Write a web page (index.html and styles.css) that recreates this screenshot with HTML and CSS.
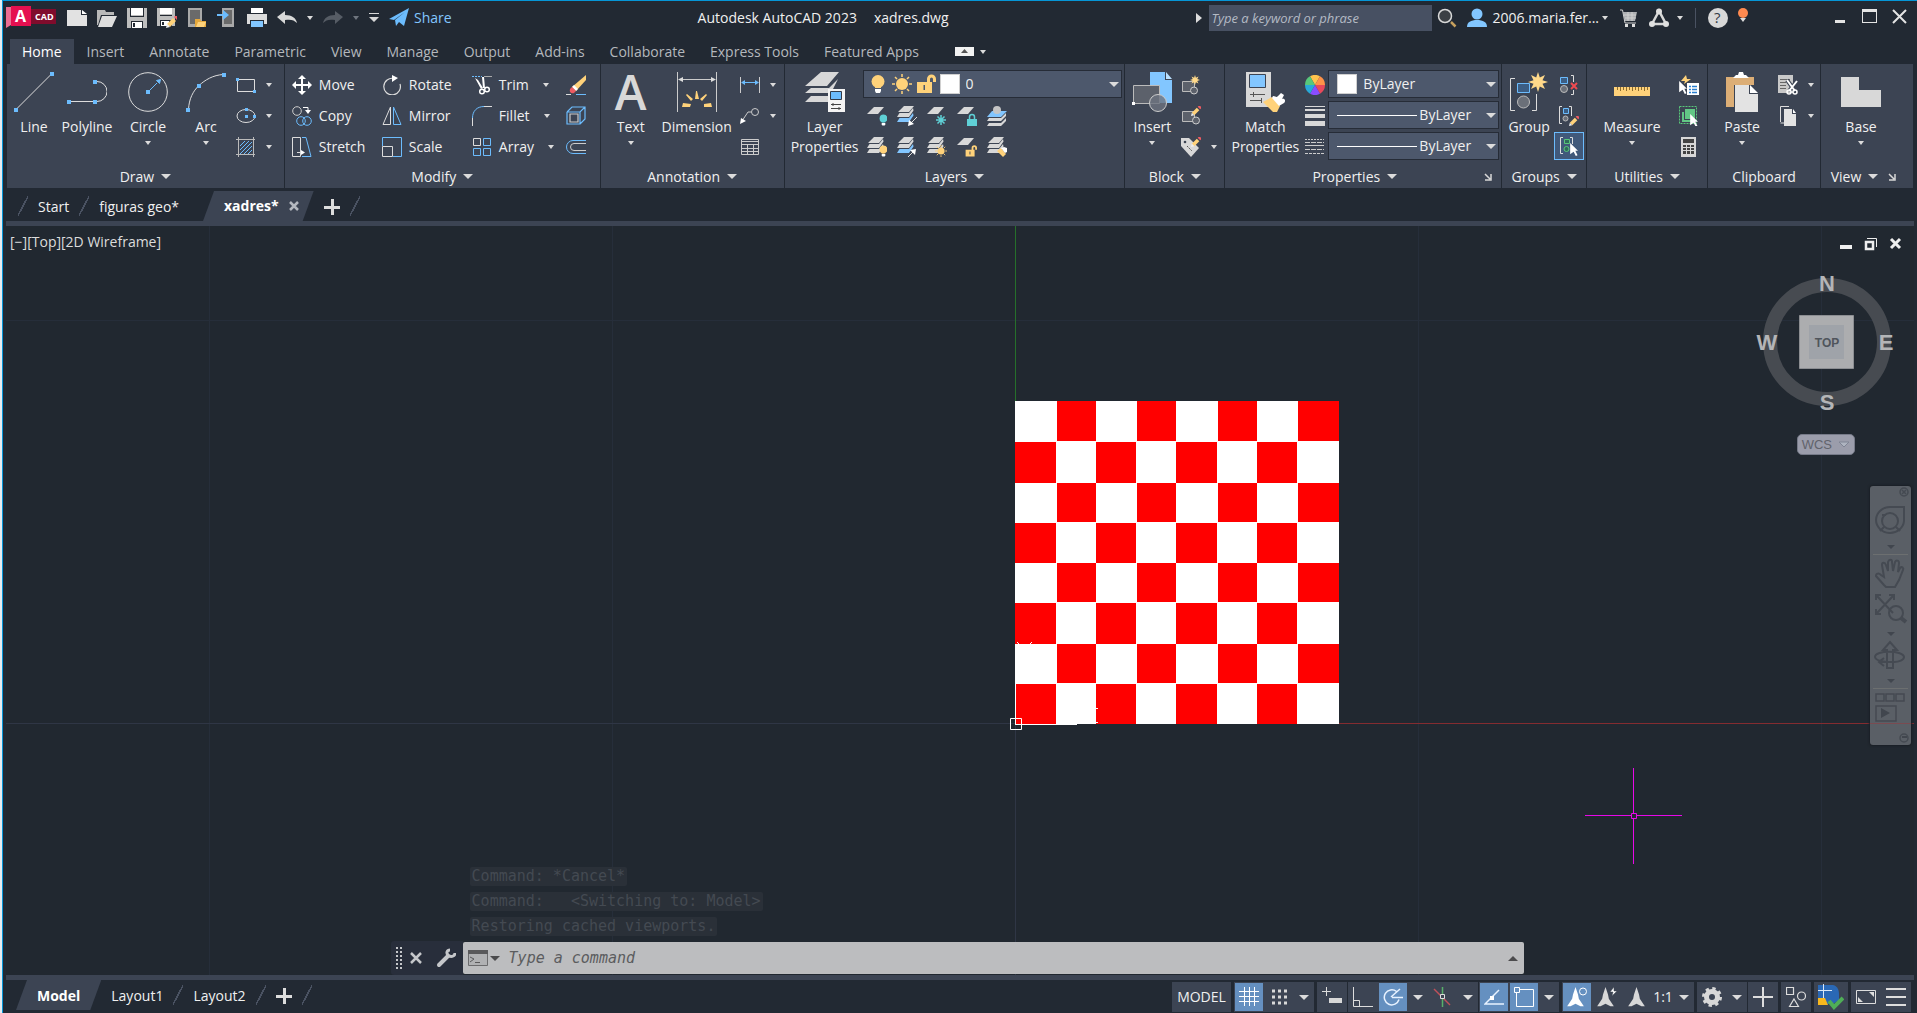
FILE: index.html
```html
<!DOCTYPE html>
<html lang="en">
  <head>
    <meta charset="UTF-8" />
    <meta name="viewport" content="width=device-width, initial-scale=1.0" />
    <title>Autodesk AutoCAD 2023 - xadres.dwg</title>
    <link rel="stylesheet" href="styles.css">
  </head>

  <body>
    <!-- Shared shapes -->
    <svg class="defs" width="0" height="0" aria-hidden="true">
      <symbol id="sheet" viewBox="0 0 20 20"><path fill="#d8d8d8" d="M7 1h10l-6 7H0z" /></symbol>
      <symbol id="stack" viewBox="0 0 20 20">
        <path fill="#d8d8d8" d="M7 0h10l-5 6H1zM2.500 7H12l4-5 .5 2.500L12 11H0zM2.500 12H12l4-5 .5 2.500L12 16H0z" />
      </symbol>
      <symbol id="stack-blue" viewBox="0 0 20 20">
        <path fill="#d8d8d8" d="M7 0h10l-5 6H1zM2.500 7H12l4-5 .5 2.500L12 11H0z" />
        <path fill="#82c6ff" d="M2.500 12H12l4-5 .5 2.500L12 16H0z" />
      </symbol>
      <symbol id="bulb" viewBox="0 0 14 20">
        <circle cx="7" cy="7.500" r="6.500" /><path d="M4 12h6v2H4z" /><path fill="#fff" d="M4 15h6v2l-1 2H5l-1-2z" />
      </symbol>
      <symbol id="sun" viewBox="0 0 20 20">
        <circle cx="10" cy="10" r="6" />
        <path stroke-width="1.500" d="M10 0v3M10 17v3M0 10h3M17 10h3M3 3l2 2M15 15l2 2M3 17l2-2M15 5l2-2" />
      </symbol>
      <symbol id="lock-open" viewBox="0 0 20 20">
        <path fill-rule="evenodd" d="M1 8h10V5a4.500 4.500 0 0 1 9 0v3h-3V5a1.500 1.500 0 0 0-3 0v3h2v11H1zM7.500 11v5h1.500v-5z" />
      </symbol>
      <symbol id="pencil" viewBox="0 0 12 12">
        <path fill="#ffd27a" d="M7 2l3 3-6 6-3-3z" /><path fill="#ee5b62" d="M8 1l1-1h2l1 1v2l-1 1z" /><path fill="#eee" d="M1 8l3 3-4 1z" />
      </symbol>
      <symbol id="cursor" viewBox="0 0 10 15">
        <path fill="#fff" d="M0 0l9 9H6l2.500 5-2 1L4 10l-4 3z" />
      </symbol>
      <symbol id="star" viewBox="0 0 20 20">
        <path fill="#ffd98a" d="M10 0l1.800 5.500L17 3l-2.500 5.200L20 10l-5.500 1.800L17 17l-5.200-2.500L10 20l-1.800-5.500L3 17l2.500-5.200L0 10l5.500-1.800L3 3l5.200 2.500z" />
      </symbol>
      <symbol id="arrow-head" viewBox="0 0 22 24">
        <path d="M11 0l3 9 1 5 6 9h-4l-6-3-6 3H1l6-9 1-5z" />
      </symbol>
      <symbol id="launcher" viewBox="0 0 8 8">
        <path fill="none" stroke="#d8d8d8" stroke-width="1.500" d="M1 1l5 5M7 1v6H1" />
      </symbol>
    </svg>

    <div class="app">
      <!-- Title bar -->
      <header class="titlebar">
        <div class="quick-access">
          <button class="logo" aria-label="Application menu">
            <svg width="50" height="24" viewBox="0 0 50 24">
              <path fill="#ec6d92" d="M0 1h5v18L0 22z" /><path fill="#800c2c" d="M24 3h26v15H24z" />
              <path fill="#e51050" d="M5 0h20v20H5z" />
              <text x="9" y="16" class="logo-a">A</text><text x="29" y="14" class="logo-cad">CAD</text>
            </svg>
          </button>
          <button aria-label="New"><svg class="icon" viewBox="0 0 20 20"><path fill="#e2e2e2" d="M0 2h14v5h6v11H0z" /><path fill="#fff" d="M15 2l5 4h-5z" /></svg></button>
          <button aria-label="Open"><svg class="icon" viewBox="0 0 20 20"><path fill="#b9b9b9" d="M0 2h8l1 2h8v3H4L1 17H0z" /><path fill="#dedede" d="M5 8h15l-5 11H1z" /></svg></button>
          <button aria-label="Save"><svg class="icon" viewBox="0 0 20 20"><path fill="#bdbdbd" d="M0 0h20v20H0z" /><path fill="#232932" d="M3 0h1v8h12V0h1v9H3z" /><path fill="#fff" d="M4 0h12v7H4z" /><path fill="#232932" d="M4 13h12v7H4z" /><path fill="#fff" d="M5 14h10v6H5z" /><path fill="#232932" d="M6 15h2v4H6z" /></svg></button>
          <button aria-label="Save As"><svg class="icon" viewBox="0 0 20 20"><path fill="#bdbdbd" d="M0 0h18v18H0z" /><path fill="#fff" d="M3 0h12v6H3z" /><path fill="#232932" d="M3 7h12v1H3zM3 12h12v6H3z" /><path fill="#fff" d="M4 13h8v5H4z" /><path fill="#232932" d="M5 14h2v3H5z" /><use href="#pencil" x="9" y="8" width="12" height="12" /></svg></button>
          <button aria-label="Open from Web and Mobile"><svg class="icon" viewBox="0 0 20 20"><path fill="#a9a9a9" d="M1 0h14v19H1z" /><path fill="#6a6a6a" d="M3 2h10v14H3z" /><path fill="#e5a83c" d="M8 11h5l1 2h5v6H8z" /><path fill="#ffd27a" d="M11 14h8l-2 5H9z" /></svg></button>
          <button aria-label="Save to Web and Mobile"><svg class="icon" viewBox="0 0 20 20"><path fill="#a9a9a9" d="M5 0h12v19H5z" /><path fill="#6a6a6a" d="M7 2h8v14H7z" /><path fill="#6cbcfd" d="M0 6h6V2l6 5-6 5V8H0z" /></svg></button>
          <button aria-label="Plot"><svg class="icon" viewBox="0 0 20 20"><path fill="#fff" d="M4 0h12v5H4z" /><path fill="#dcdcdc" d="M0 6h20v10h-3v-4H3v4H0z" /><path fill="#82c6ff" d="M4 13h12v6H4z" /></svg></button>
          <button aria-label="Undo"><svg class="icon" viewBox="0 0 20 20"><path fill="#d8d8d8" d="M0 9l8-6v4c7 0 11 3 12 8-3-3-6-4-12-3v4z" /></svg></button>
          <button class="narrow" aria-label="Undo list"><i class="caret"></i></button>
          <button aria-label="Redo"><svg class="icon" viewBox="0 0 20 20"><path fill="#565c65" d="M20 9l-8-6v4C5 7 1 10 0 15c3-3 6-4 12-3v4z" /></svg></button>
          <button class="narrow" aria-label="Redo list"><i class="caret dim"></i></button>
          <button aria-label="Customize toolbar"><svg width="10" height="10" viewBox="0 0 10 10"><path fill="#d8d8d8" d="M0 0h10v1H0zM0 4h10L5 9z" /></svg></button>
          <button class="share"><svg class="icon" viewBox="0 0 20 20"><path fill="#6cbcfd" d="M0 11L20 0l-5 18-5-4-3 4-1-6L16 4 5 12z" /></svg>Share</button>
        </div>

        <h1 class="window-title"><span>Autodesk AutoCAD 2023</span><span>xadres.dwg</span></h1>

        <div class="title-tools">
          <svg width="8" height="10" viewBox="0 0 8 10"><path fill="#ddd" d="M1 0l6 5-6 5z" /></svg>
          <input class="search" type="text" placeholder="Type a keyword or phrase" aria-label="Search help" />
          <button aria-label="Search"><svg class="icon" viewBox="0 0 20 20"><path stroke="#c6a05e" stroke-width="2.500" d="M14 14l4.500 4.500" /><circle cx="8" cy="8" r="6.500" fill="#3c4045" stroke="#d8d8d8" stroke-width="1.500" /></svg></button>
          <button class="user"><svg class="icon" viewBox="0 0 20 20"><circle cx="10" cy="6" r="5.500" fill="#82c6ff" /><path fill="#82c6ff" d="M0 19c0-5 4-7 10-7s10 2 10 7z" /></svg>2006.maria.fer...<i class="caret"></i></button>
          <button class="cart" aria-label="Autodesk App Store"><svg class="icon" viewBox="0 0 20 20"><path fill="#aeb0b3" d="M4 4h14l-2 9H6z" /><path fill="none" stroke="#d0d0d0" d="M1 2h2.500L6 15h11M5 7h12M6 10h11M9 4v9M13 4v9" /><path fill="#ddd" d="M6 16h3v3H6zM13 16h3v3h-3z" /></svg></button>
          <button class="connect" aria-label="Connect"><svg class="icon" viewBox="0 0 20 20"><path fill="none" stroke="#d8d8d8" stroke-width="2.500" d="M10 3L3 16h14z" /><g fill="#e0e0e0"><circle cx="10" cy="3.500" r="3" /><circle cx="3" cy="16" r="3" /><circle cx="17" cy="16" r="3" /></g></svg><i class="caret"></i></button>
          <button class="help" aria-label="Help"><svg class="icon" viewBox="0 0 20 20"><circle cx="10" cy="10" r="10" fill="#d8d8d8" /><text x="6" y="15" class="help-mark">?</text></svg></button>
          <button class="notice" aria-label="Notifications"><i class="dot"></i><i class="caret"></i></button>
          <div class="window-buttons">
            <button aria-label="Minimize"><svg width="16" height="16" viewBox="0 0 16 16"><path fill="#e4e4e4" d="M3 12h10v3H3z" /></svg></button>
            <button aria-label="Maximize"><svg width="16" height="16" viewBox="0 0 16 16"><path fill="#e4e4e4" fill-rule="evenodd" d="M0 1h15v14H0zM1 4v10h13V4z" /></svg></button>
            <button aria-label="Close"><svg width="16" height="16" viewBox="0 0 16 16"><path stroke="#e4e4e4" stroke-width="2" d="M1 2l13 13M14 2L1 15" /></svg></button>
          </div>
        </div>
      </header>

      <!-- Ribbon tabs -->
      <nav class="ribbon-tabs">
        <button class="active">Home</button>
        <button>Insert</button>
        <button>Annotate</button>
        <button>Parametric</button>
        <button>View</button>
        <button>Manage</button>
        <button>Output</button>
        <button>Add-ins</button>
        <button>Collaborate</button>
        <button>Express Tools</button>
        <button>Featured Apps</button>
        <button class="minimize" aria-label="Minimize ribbon"><svg width="19" height="9" viewBox="0 0 19 9"><path fill="#f2f2f2" d="M0 0h19v9H0z" /><path fill="#555" d="M6 6l3.500-4L13 6z" /></svg><i class="caret"></i></button>
      </nav>

      <!-- Ribbon -->
      <div class="ribbon">
        <section class="panel draw">
          <div class="panel-body">
            <button class="big"><svg viewBox="0 0 40 40"><path stroke="#ddd" d="M1.500 38L38 1.500" /><path fill="#6cbcfd" d="M0 36h4v4H0zM36 0h4v4h-4z" /></svg>Line</button>
            <button class="big medium"><svg viewBox="0 0 40 40"><path fill="none" stroke="#ddd" d="M1 29.500h29a10 10 0 0 0 0-20h-3" /><path fill="#6cbcfd" d="M0 28h4v4H0zM26 28h4v4h-4zM26 8h4v4h-4z" /></svg>Polyline</button>
            <button class="big wide"><svg viewBox="0 0 40 40"><circle cx="20" cy="20" r="19.300" fill="none" stroke="#ddd" /><path fill="#6cbcfd" stroke="#6cbcfd" d="M20 20l9-9M28.500 8.500l4-1-1 4z" /><path fill="#6cbcfd" d="M18 18h4v4h-4z" /></svg>Circle<i class="caret"></i></button>
            <button class="big"><svg viewBox="0 0 40 40"><path fill="none" stroke="#ddd" d="M2.500 37.500C3 27 7 19 13 13.500S27 3 37.500 2.500" /><path fill="#6cbcfd" d="M0 36h4v4H0zM11 12h4v4h-4zM36 1h4v4h-4z" /></svg>Arc<i class="caret"></i></button>
            <div class="tools">
              <button aria-label="Rectangle"><svg class="icon" viewBox="0 0 20 20"><path fill="none" stroke="#ddd" d="M1.500 4.500h17v12h-17z" /><path fill="#6cbcfd" d="M0 3h3v3H0zM17 15h3v3h-3z" /></svg><i class="caret"></i></button>
              <button aria-label="Ellipse"><svg class="icon" viewBox="0 0 20 20"><ellipse cx="10" cy="10" rx="9" ry="6.500" fill="none" stroke="#ddd" /><path fill="#6cbcfd" d="M9 2h3v3H9zM9 9h3v3H9zM17 9h3v3h-3z" /></svg><i class="caret"></i></button>
              <button aria-label="Hatch"><svg class="icon" viewBox="0 0 20 20"><path stroke="#6cbcfd" d="M4 9l5-5M4 13l9-9M4 17L16 5M8 17l8-8M12 17l4-4" /><path stroke="#bbb" d="M0 2.500h19M0 17.500h19M2.500 0v20M17.500 0v20" /></svg><i class="caret"></i></button>
            </div>
          </div>
          <div class="panel-title"><button>Draw<i class="caret"></i></button></div>
        </section>

        <section class="panel modify">
          <div class="panel-body">
            <div class="tools">
              <button><svg class="icon" viewBox="0 0 20 20"><path fill="#fff" d="M10 0l4 4h-3v5h5V6l4 4-4 4v-3h-5v5h3l-4 4-4-4h3v-5H4v3l-4-4 4-4v3h5V4H6z" /></svg>Move</button>
              <button><svg class="icon" viewBox="0 0 20 20"><circle cx="5" cy="5" r="4.300" fill="none" stroke="#ccc" /><path fill="none" stroke="#fff" d="M11 1.500h5v4" /><path fill="#fff" d="M13 4h6l-3 4z" /><g fill="none" stroke="#6cbcfd"><circle cx="9" cy="15" r="4.300" /><circle cx="15" cy="15" r="4.300" /></g></svg>Copy</button>
              <button><svg class="icon" viewBox="0 0 20 20"><path fill="none" stroke="#ddd" d="M.5.500h8v19h-8zM5 15.500h5" /><path fill="#fff" d="M9 13l4 2.500L9 18z" /><path fill="none" stroke="#6cbcfd" d="M10 .5h4l5 19h-9" /></svg>Stretch</button>
            </div>
            <div class="tools">
              <button><svg class="icon" viewBox="0 0 20 20"><path fill="none" stroke="#ddd" stroke-width="1.200" d="M12 3.500A8.300 8.300 0 1 0 18 9" /><path fill="#fff" d="M10 0l6 3-6 4z" /></svg>Rotate</button>
              <button><svg class="icon" viewBox="0 0 20 20"><path fill="none" stroke="#ddd" d="M8.500 1v17.500H1z" /><path fill="none" stroke="#6cbcfd" d="M11.500 1v17.500H19z" /></svg>Mirror</button>
              <button><svg class="icon" viewBox="0 0 20 20"><path fill="none" stroke="#6cbcfd" d="M.5 9V.5h19v19H11" /><path fill="none" stroke="#ddd" d="M.5 9.500h10v10H.5z" /></svg>Scale</button>
            </div>
            <div class="tools">
              <button><svg class="icon" viewBox="0 0 20 20"><path stroke="#6cbcfd" stroke-dasharray="2 1" d="M0 1.500h10" /><path stroke="#aaa" d="M12 1.500h8" /><path fill="#fff" d="M3 3l3 2 5 8-2 1zM10 2h2l1 11h-2z" /><g fill="none" stroke="#fff" stroke-width="1.500"><circle cx="10" cy="16.500" r="2.300" /><circle cx="15" cy="14.500" r="2.300" /></g></svg>Trim<i class="caret"></i></button>
              <button><svg class="icon" viewBox="0 0 20 20"><path fill="none" stroke="#6cbcfd" d="M.5 12C.5 5 5 .5 12 .5" /><path stroke="#ddd" d="M.5 12v8M12 .5h8" /></svg>Fillet<i class="caret"></i></button>
              <button><svg class="icon" viewBox="0 0 20 20"><path fill="none" stroke="#ddd" d="M1.500 1.500h7v7h-7z" /><path fill="none" stroke="#6cbcfd" d="M11.500 1.500h7v7h-7zM1.500 11.500h7v7h-7zM11.500 11.500h7v7h-7z" /></svg>Array<i class="caret"></i></button>
            </div>
            <div class="tools">
              <button aria-label="Erase"><svg class="icon" viewBox="0 0 20 20"><path fill="#ffd27a" d="M20 0v5L10 16l-4-4z" /><path fill="#fff" d="M8 10l4 4-2 2-4-4z" /><path fill="#ee5b62" d="M6 12l4 4-2 2c-3 1-5-1-4-4z" /><path stroke="#ddd" d="M0 19.500h5" /><path stroke="#6cbcfd" d="M10 19.500h10" /></svg></button>
              <button aria-label="Explode"><svg class="icon" viewBox="0 0 20 20"><g fill="none" stroke="#6cbcfd" stroke-width="1.200"><path d="M1 6l5-5h13v12l-5 5M1 6v12h13M1 6h13l5-5M14 6v12" /><path stroke="#ccc" d="M4 8h8v8H4z" /></g></svg></button>
              <button aria-label="Offset"><svg class="icon" viewBox="0 0 20 20"><path fill="none" stroke="#6cbcfd" d="M20 3.500H7a6.500 6.500 0 0 0 0 13h13" /><path fill="none" stroke="#ccc" d="M20 6.500H8a3.500 3.500 0 0 0 0 7h12" /></svg></button>
            </div>
          </div>
          <div class="panel-title"><button>Modify<i class="caret"></i></button></div>
        </section>

        <section class="panel annotation">
          <div class="panel-body">
            <button class="big"><span class="letter" aria-hidden="true">A</span>Text<i class="caret"></i></button>
            <button class="big extra"><svg viewBox="0 0 40 40"><path stroke="#ccc" d="M.5 0v40M39.500 0v40M2 7.500h36" /><path fill="#ddd" d="M1 7.500L6 5v5zM39 7.500L34 5v5z" /><path fill="#ffd27a" d="M18 27l1-8h1l2 8zM14 29l-5-6 1-1 6 5zM25 29l5-6-1-1-6 5zM14 32l-8-1-1 4h8zM27 32l7-1 1 4h-8z" /></svg>Dimension</button>
            <div class="tools">
              <button aria-label="Linear"><svg class="icon" viewBox="0 0 20 20"><path stroke="#ccc" d="M.5 2v16M19.500 2v16" /><path stroke="#6cbcfd" d="M2 7.500h16" /><path fill="#6cbcfd" d="M1 7.500L5 5v5zM19 7.500L15 5v5z" /></svg><i class="caret"></i></button>
              <button aria-label="Leader"><svg class="icon" viewBox="0 0 20 20"><circle cx="15" cy="6" r="3.500" fill="none" stroke="#ccc" /><path fill="none" stroke="#ccc" d="M11 6H8l-6 9" /><path fill="#fff" d="M0 18l1-6 5 3z" /></svg><i class="caret"></i></button>
              <button aria-label="Table"><svg class="icon" viewBox="0 0 20 20"><path fill="none" stroke="#ccc" d="M1.500 2.500h17v15h-17zM1 4.500h18M1 7.500h18M1 11.500h18M1 14.500h18M7.500 7v11M13.500 7v11" /></svg></button>
            </div>
          </div>
          <div class="panel-title"><button>Annotation<i class="caret"></i></button></div>
        </section>

        <section class="panel layers">
          <div class="panel-body">
            <button class="big extra"><svg viewBox="0 0 40 40"><path fill="#d8d8d8" d="M16 0h18L22 14H0zM6 16h18l9-9-5 10v2l-3 2H0zM6 24h17v6H0z" /><path fill="#f4f4f4" d="M23 17h17v23H23z" /><path fill="#6cbcfd" stroke="#333b48" d="M25.500 19.500h11v8h-11z" /><path stroke="#444" d="M26 32.500h10M26 36.500h10M28 31v3M34 35v3" /></svg>Layer<br />Properties</button>
            <div class="layer-tools">
              <div class="combo">
                <svg class="icon yellow" viewBox="0 0 20 20"><use href="#bulb" x="3" width="14" height="20" /></svg>
                <svg class="icon yellow" viewBox="0 0 20 20"><use href="#sun" /></svg>
                <svg class="icon yellow" viewBox="0 0 20 20"><use href="#lock-open" /></svg>
                <i class="swatch"></i>
                <select aria-label="Layer"><option>0</option></select>
                <i class="caret large"></i>
              </div>
              <div class="icon-row">
                <button aria-label="Off"><svg class="icon cyan" viewBox="0 0 20 20"><use href="#sheet" /><use href="#bulb" x="12" y="8" width="9" height="12" /></svg></button>
                <button aria-label="Isolate"><svg class="icon" viewBox="0 0 20 20"><use href="#stack-blue" /><path stroke="#ddd" d="M20 11l-7 7" /><path fill="#fff" d="M11 20l1-6 5 4z" /></svg></button>
                <button aria-label="Freeze"><svg class="icon" viewBox="0 0 20 20"><use href="#sheet" /><path stroke="#5fd0d6" stroke-width="1.500" d="M14 9v10M9 14h10M10.500 10.500l7 7M17.500 10.500l-7 7" /></svg></button>
                <button aria-label="Lock"><svg class="icon" viewBox="0 0 20 20"><use href="#sheet" /><path fill="none" stroke="#5fd0d6" stroke-width="1.500" d="M12.500 14v-3a2.500 2.500 0 0 1 5 0v3" /><path fill="#5fd0d6" d="M10 13h10v7H10z" /></svg></button>
                <button aria-label="Make Current"><svg class="icon" viewBox="0 0 20 20"><path fill="#82c6ff" d="M5 5h15l-6 6H0z" /><circle cx="10" cy="4" r="4" fill="#c5c5c5" /><path fill="#d8d8d8" d="M2 12h12l5-5v3l-5 5H0zM2 17h12l5-5v3l-5 5H0z" /></svg></button>
              </div>
              <div class="icon-row">
                <button aria-label="Turn All Layers On"><svg class="icon yellow" viewBox="0 0 20 20"><use href="#stack" /><use href="#bulb" x="12" y="8" width="9" height="12" /></svg></button>
                <button aria-label="Unisolate"><svg class="icon" viewBox="0 0 20 20"><use href="#stack-blue" /><path stroke="#ddd" d="M11 20l6-6" /><path fill="#fff" d="M19 12l-1 6-5-5z" /></svg></button>
                <button aria-label="Thaw All Layers"><svg class="icon yellow" viewBox="0 0 20 20"><use href="#stack" /><use href="#sun" x="8" y="8" width="12" height="12" /></svg></button>
                <button aria-label="Unlock"><svg class="icon yellow" viewBox="0 0 20 20"><use href="#sheet" /><use href="#lock-open" x="8" y="8" width="12" height="12" /></svg></button>
                <button aria-label="Match Layer"><svg class="icon" viewBox="0 0 20 20"><use href="#stack" /><path fill="#ffd27a" d="M10 14l4-3 5 6-3 3z" /><path fill="#fff" d="M14 11l3-1 3 1v4l-2 1z" /></svg></button>
              </div>
            </div>
          </div>
          <div class="panel-title"><button>Layers<i class="caret"></i></button></div>
        </section>

        <section class="panel block">
          <div class="panel-body">
            <button class="big"><svg viewBox="0 0 40 40"><path fill="#82c6ff" d="M18 0h15v8h7v23H18z" /><path fill="#b9e0ff" d="M34 0l6 7h-6z" /><path fill="#5c616b" stroke="#bbb" d="M1.500 13.500h26v18h-26z" /><circle cx="26" cy="31" r="8.500" fill="#6d7380" fill-opacity=".8" stroke="#ccc" /><path fill="#fff" d="M0 30h3v3H0z" /></svg>Insert<i class="caret"></i></button>
            <div class="tools">
              <button aria-label="Create Block"><svg class="icon" viewBox="0 0 20 20"><path fill="#5c616b" stroke="#bbb" d="M1.500 6.500h12v10h-12z" /><circle cx="13" cy="15.500" r="3.500" fill="#5c616b" stroke="#ccc" /><use href="#star" x="9" y="0" width="10" height="10" /></svg></button>
              <button aria-label="Edit Block"><svg class="icon" viewBox="0 0 20 20"><path fill="#5c616b" stroke="#bbb" d="M1.500 5.500h12v10h-12z" /><circle cx="15" cy="14.500" r="3.500" fill="#5c616b" stroke="#ccc" /><use href="#pencil" x="10" y="0" width="10" height="10" /></svg></button>
              <button aria-label="Edit Attributes"><svg class="icon" viewBox="0 0 20 20"><path fill="#d8d8d8" d="M0 1h8l10 10-8 9L0 9z" /><circle cx="4" cy="5" r="1.300" fill="#3c4453" /><path stroke="#555" stroke-dasharray="2 1" d="M6 9l5 5" /><use href="#pencil" x="10" y="0" width="10" height="10" /></svg><i class="caret"></i></button>
            </div>
          </div>
          <div class="panel-title"><button>Block<i class="caret"></i></button></div>
        </section>

        <section class="panel properties">
          <div class="panel-body">
            <button class="big extra"><svg viewBox="0 0 40 40"><path fill="#d8d8d8" d="M1 0h25v35H1z" /><path fill="#82c6ff" stroke="#3c4453" d="M4.500 2.500h16v13h-16z" /><path stroke="#555" d="M5 22.500h15M5 28.500h12M8.500 20v5M16.500 26v5" /><path fill="#ffd27a" d="M18 30l9-5 8 9-3 6h-4z" /><path fill="#fff" d="M28 24c3 0 3 2 5 0l3-3 3 2-2 4c3-1 4 2 2 4l-5 3-7-8z" /></svg>Match<br />Properties</button>
            <div class="prop-rows">
              <div class="prop-row">
                <svg class="icon" viewBox="0 0 20 20"><path fill="#ffc34d" d="M10 10L5 1.300a10 10 0 0 1 10 0z" /><path fill="#ff9248" d="M10 10l5-8.700A10 10 0 0 1 20 10z" /><path fill="#e8495b" d="M10 10h10a10 10 0 0 1-5 8.700z" /><path fill="#8a4dff" d="M10 10l5 8.700a10 10 0 0 1-10 0z" /><path fill="#28a9d8" d="M10 10l-5 8.700A10 10 0 0 1 0 10z" /><path fill="#58c77a" d="M10 10H0a10 10 0 0 1 5-8.700z" /></svg>
                <div class="combo"><i class="swatch"></i><select aria-label="Object color"><option>ByLayer</option></select><i class="caret large"></i></div>
              </div>
              <div class="prop-row">
                <svg class="icon" viewBox="0 0 20 20"><path fill="#d8d8d8" d="M0 0h20v1H0zM0 3h20v2H0zM0 8h20v4H0zM0 15h20v5H0z" /></svg>
                <div class="combo"><i class="line-sample"></i><select aria-label="Lineweight"><option>ByLayer</option></select><i class="caret large"></i></div>
              </div>
              <div class="prop-row">
                <svg class="icon" viewBox="0 0 20 20"><g stroke="#ccc"><path stroke-dasharray="2 1" d="M0 2.500h19" /><path stroke-dasharray="5 1" d="M0 5.500h19M0 12.500h19" /><path d="M0 8.500h19" /><path stroke-dasharray="3 1" d="M0 16.500h19" /></g></svg>
                <div class="combo"><i class="line-sample"></i><select aria-label="Linetype"><option>ByLayer</option></select><i class="caret large"></i></div>
              </div>
            </div>
          </div>
          <div class="panel-title"><button>Properties<i class="caret"></i></button><button class="launcher" aria-label="Properties palette"><svg width="8" height="8"><use href="#launcher" /></svg></button></div>
        </section>

        <section class="panel groups">
          <div class="panel-body">
            <button class="big"><svg viewBox="0 0 40 40"><path fill="none" stroke="#ddd" d="M6 6.500H1.500v32H6M23 38.500h4.500V22" /><path fill="#3c5e84" stroke="#6cbcfd" d="M8.500 11.500h12v9h-12z" /><circle cx="14.500" cy="30" r="6" fill="#6b7079" stroke="#bbb" /><use href="#star" x="19" y="0" width="20" height="20" /></svg>Group</button>
            <div class="tools">
              <button aria-label="Ungroup"><svg class="icon" viewBox="0 0 20 20"><path fill="#3c5e84" stroke="#6cbcfd" d="M1.500 2.500h7v6h-7z" /><circle cx="5" cy="14" r="3.500" fill="#6b7079" stroke="#bbb" /><path fill="none" stroke="#ddd" d="M12 .5h2.500V7M12 19.500h2.500V15" /><path stroke="#f04a50" stroke-width="2" d="M12 8l6 6M18 8l-6 6" /></svg></button>
              <button aria-label="Group Edit"><svg class="icon" viewBox="0 0 20 20"><path fill="none" stroke="#ddd" d="M3 .5H.5v17H3M10 .5h2.500V10" /><path fill="#3c5e84" stroke="#6cbcfd" d="M4.500 2.500h5v5h-5z" /><circle cx="6.500" cy="12.500" r="2.500" fill="#6b7079" stroke="#bbb" /><use href="#pencil" x="10" y="10" width="10" height="10" /></svg></button>
              <button class="selected" aria-label="Group Selection On/Off"><svg class="icon" viewBox="0 0 20 20"><path fill="none" stroke="#ddd" d="M4 1.500H1.500v16H4M11 1.500h2.500V8" /><path fill="#2f6b5b" stroke="#58c77a" d="M5.500 3.500h5v4h-5z" /><circle cx="7.500" cy="13" r="2.500" fill="#2f6b5b" stroke="#58c77a" /><use href="#cursor" x="11" y="7" width="9" height="13" /></svg></button>
            </div>
          </div>
          <div class="panel-title"><button>Groups<i class="caret"></i></button></div>
        </section>

        <section class="panel utilities">
          <div class="panel-body">
            <button class="big extra"><svg viewBox="0 0 40 40"><path fill="#ffd27a" d="M2 15h36v9H2z" /><path stroke="#8d6d2e" d="M5.500 15v3M8.500 15v4M11.500 15v3M14.500 15v4M17.500 15v3M20.500 15v4M23.500 15v3M26.500 15v4M29.500 15v3M32.500 15v4M35.500 15v3" /></svg>Measure<i class="caret"></i></button>
            <div class="tools">
              <button aria-label="Quick Select"><svg class="icon" viewBox="0 0 20 20"><path fill="#fff" d="M8 8h12v12H8z" /><path stroke="#2a7fd0" stroke-width="1.500" d="M10 11.500h2M13 11.500h5M10 14.500h2M13 14.500h5M10 17.500h2M13 17.500h5" /><path fill="#ffd27a" d="M7 0L2 6h4L5 9l7-5H8z" /><use href="#cursor" y="6" width="9" height="13" /></svg></button>
              <button aria-label="Select All"><svg class="icon" viewBox="0 0 20 20"><path fill="none" stroke="#58c77a" stroke-dasharray="2 1" d="M.5.500h17v17H.5z" /><path fill="#62c785" d="M6 3h10v10H6z" /><path fill="#62c785" d="M3 6h2v8h8v2H3z" /><use href="#cursor" x="11" y="8" width="9" height="13" /></svg></button>
              <button aria-label="Quick Calculator"><svg class="icon" viewBox="0 0 20 20"><path fill="#d8d8d8" d="M2 0h15v20H2z" /><path fill="#444" d="M4 2h11v4H4zM4 8h3v2H4zM8 8h3v2H8zM12 8h3v2h-3zM4 11h3v2H4zM8 11h3v2H8zM12 11h3v2h-3zM4 14h3v3H4zM8 14h3v3H8zM12 14h3v3h-3z" /></svg></button>
            </div>
          </div>
          <div class="panel-title"><button>Utilities<i class="caret"></i></button></div>
        </section>

        <section class="panel clipboard">
          <div class="panel-body">
            <button class="big"><svg viewBox="0 0 40 40"><path fill="#dcae76" d="M4 5h28v8H12v22H4z" /><path fill="#fff" d="M11 6l3-3h2l1-3h4l1 3h2l3 3z" /><path fill="#e3e3e3" d="M13 13h14v9h9v18H13z" /><path fill="#fff" d="M28 13l8 8h-8z" /></svg>Paste<i class="caret"></i></button>
            <div class="tools">
              <button aria-label="Cut"><svg class="icon" viewBox="0 0 20 20"><path fill="#c9c9c9" d="M0 0h15v18H0z" /><path stroke="#666" d="M2 4.500h10M2 7.500h6M2 10.500h6M2 13.500h6" /><path stroke="#3c4453" stroke-width="4" d="M9 5l8 11M19 6l-8 10" /><path stroke="#fff" stroke-width="2" d="M9 5l8 11M19 6l-8 10" /><g fill="none" stroke="#fff" stroke-width="1.500"><circle cx="11" cy="17" r="2" /><circle cx="17" cy="17" r="2" /></g></svg><i class="caret"></i></button>
              <button aria-label="Copy Clip"><svg class="icon" viewBox="0 0 20 20"><path fill="none" stroke="#ddd" d="M2.500 16V.5H11M6 17H2.500" /><path fill="#e3e3e3" d="M6 3h8v5h4v12H6z" /><path fill="#fff" d="M15 3l3 4h-3z" /></svg><i class="caret"></i></button>
            </div>
          </div>
          <div class="panel-title"><button>Clipboard</button></div>
        </section>

        <section class="panel view">
          <div class="panel-body">
            <button class="big extra"><svg viewBox="0 0 40 40"><path fill="#d8d8d8" d="M0 5h18v13h22v17H0z" /></svg>Base<i class="caret"></i></button>
          </div>
          <div class="panel-title"><button>View<i class="caret"></i></button><button class="launcher" aria-label="View options"><svg width="8" height="8"><use href="#launcher" /></svg></button></div>
        </section>
      </div>

      <!-- Drawing tabs -->
      <nav class="file-tabs">
        <i class="slash"></i>
        <button>Start</button>
        <i class="slash"></i>
        <button class="file">figuras geo*</button>
        <button class="active">xadres*<svg width="10" height="10" viewBox="0 0 10 10"><path stroke="#b4b8bf" stroke-width="2.500" d="M1 1l8 8M9 1L1 9" /></svg></button>
        <button aria-label="New drawing"><svg width="16" height="16" viewBox="0 0 16 16"><path fill="#ddd" d="M7 0h3v16H7zM0 7h16v3H0z" /></svg></button>
        <i class="slash"></i>
      </nav>

      <!-- Drawing area -->
      <main class="viewport">
        <svg class="drawing" width="100%" height="100%">
          <path stroke="#262e3a" fill="none" d="M203.500 0v760M606.500 0v760M1412.500 0v760M1815.500 0v760M0 94.500h1920" />
          <path stroke="#2f3645" d="M0 497.500h1009M1009.500 498v260" />
          <path stroke="#26702a" d="M1009.500 0v175" />
          <path stroke="#842c30" d="M1333 497.500h590" />
          <g transform="translate(1009 175)">
            <path fill="#fff" d="M0 0h324v323H0z" />
            <g fill="red">
              <path d="M42 0h39v40H42zM122 0h39v40h-39zM203 0h39v40h-39zM283 0h41v40h-41z" />
              <path d="M0 41h41v41H0zM81 41h40v41H81zM161 41h41v41h-41zM242 41h40v41h-40z" />
              <path d="M42 82h39v39H42zM122 82h39v39h-39zM203 82h39v39h-39zM283 82h41v39h-41z" />
              <path d="M0 122h41v40H0zM81 122h40v40H81zM161 122h41v40h-41zM242 122h40v40h-40z" />
              <path d="M42 162h39v39H42zM122 162h39v39h-39zM203 162h39v39h-39zM283 162h41v39h-41z" />
              <path d="M0 202h41v41H0zM81 202h40v41H81zM161 202h41v41h-41zM242 202h40v41h-40z" />
              <path d="M42 243h39v39H42zM122 243h39v39h-39zM203 243h39v39h-39zM283 243h41v39h-41z" />
              <path d="M0 283h41v40H0zM81 283h40v40H81zM161 283h41v40h-41zM242 283h40v40h-40z" />
            </g>
            <!-- UCS icon -->
            <path stroke="#fff" fill="none" d="M.5 282v41M0 323.500h62M-4.500 317.500h11v11h-11zM2 241l2 2M17 241l-2 2M81 307.500h2M81 321.500h2" />
          </g>
          <path stroke="#e808e8" fill="none" d="M1579 589.500h46M1630 589.500h46M1627.500 542v46M1627.500 592v46M1625.500 587.500h5v5h-5z" />
        </svg>

        <div class="view-label">[−][Top][2D Wireframe]</div>

        <div class="view-buttons">
          <button aria-label="Minimize view"><svg width="14" height="14" viewBox="0 0 14 14"><path fill="#f0f0f0" d="M1 8h12v4H1z" /></svg></button>
          <button aria-label="Restore view"><svg width="14" height="14" viewBox="0 0 14 14"><path fill="none" stroke="#eee" d="M3 1.500h9.500V10" /><path fill="none" stroke="#eee" stroke-width="2.500" d="M2 5h7v7H2z" /></svg></button>
          <button aria-label="Close view"><svg width="14" height="14" viewBox="0 0 14 14"><path stroke="#eee" stroke-width="3" d="M2 2l9 9M11 2l-9 9" /></svg></button>
        </div>

        <svg class="compass" width="144" height="144" viewBox="0 0 144 144">
          <circle cx="72" cy="72" r="57" fill="none" stroke="#474b51" stroke-width="14" />
          <path fill="#acadaf" stroke="#8c8e92" d="M44.500 45.500h54v53h-54z" />
          <path fill="#9fa3a9" d="M54 55h35v34H54z" />
          <text class="cube-face" x="72" y="77">TOP</text>
          <g class="cube-side"><text x="72" y="21">N</text><text x="12" y="80">W</text><text x="131" y="80">E</text><text x="72" y="140">S</text></g>
        </svg>
        <button class="wcs">WCS<svg width="12" height="7" viewBox="0 0 12 7"><path fill="#aeb4c0" stroke="#7f8494" d="M1 1h10L6 6z" /></svg></button>

        <div class="navbar">
          <svg width="41" height="259" viewBox="0 0 41 259">
            <g fill="none" stroke="#454a52" stroke-width="2">
              <circle cx="34" cy="6" r="4" stroke-width="1.500" /><path stroke-width="1.500" d="M32 4l4 4M36 4l-4 4" />
              <path d="M20 21h14v14a14 13 0 1 1-14-14z" /><circle cx="20" cy="35" r="8" /><path d="M10 45l4-4M30 45l-4-4M12 29h4" />
              <path d="M14 99l-8-9c0-3 3-3 5-1l3 2-2-12c0-3 3-3 4 0l2 6V76c1-3 4-3 4 0l1 9 2-9c1-2 4-2 4 1l-1 9 2-4c2-2 4 0 3 2l-4 10-4 7H16z" />
              <path d="M7 110l16 17M23 110L7 127M6 114v-5h5M19 109h5v5M6 123v5h5" /><circle cx="26" cy="127" r="7" />
              <path stroke-width="4" d="M31 132l5 4" />
              <path d="M17 182v-18h-4l7-8 7 8h-4v18zM17 176c-9-1-12-3-12-5 0-7 28-7 29 0 0 3-5 5-10 5h-14M14 172l-5 4 5 4" />
              <path stroke-width="1.500" d="M6 208h8v7H6zM16 208h8v7h-8zM26 208h8v7h-8zM6 220h20v15H6z" />
              <circle cx="34" cy="252" r="4" stroke-width="1.500" />
            </g>
            <path fill="#41464e" d="M17 59h8l-4 4zM17 146h8l-4 4zM17 193h8l-4 4zM11 222l9 5-9 5zM32 250h5v2h-5z" />
            <path stroke="#6c6f70" d="M3 68.500h35M3 202.500h35" /><path stroke="#7a4b51" d="M0 237.500h41" />
          </svg>
        </div>

        <div class="command">
          <div class="history">
            <p>Command: *Cancel*</p>
            <p>Command:   &lt;Switching to: Model&gt;</p>
            <p>Restoring cached viewports.</p>
          </div>
          <div class="command-line">
            <div class="command-handle">
              <svg width="6" height="22" viewBox="0 0 6 22"><path stroke="#c5c7ca" stroke-width="2" stroke-dasharray="2 2" d="M1 0v22M5 0v22" /></svg>
              <button aria-label="Close command line"><svg width="12" height="12" viewBox="0 0 12 12"><path stroke="#c5c7ca" stroke-width="2.500" d="M1 1l10 10M11 1L1 11" /></svg></button>
              <button aria-label="Customize"><svg width="20" height="20" viewBox="0 0 20 20"><path stroke="#c5c7ca" stroke-width="4" stroke-linecap="round" d="M3 17l9-9" /><path fill="none" stroke="#c5c7ca" stroke-width="3" d="M14 2c-3 0-4 3-2 5l1 1c3 1 6 0 6-3" /></svg></button>
            </div>
            <div class="command-box">
              <svg width="20" height="16" viewBox="0 0 20 16"><path fill="#b0b1b3" stroke="#6b6b6d" d="M.5.500h19v15H.5z" /><path fill="#59595b" d="M0 0h20v4H0z" /><path fill="none" stroke="#59595b" d="M2 7l4 2-4 3M7 12.500h5" /></svg>
              <i class="caret large dark"></i>
              <input type="text" placeholder="Type a command" aria-label="Command" />
              <i class="caret large dark up"></i>
            </div>
          </div>
        </div>
      </main>

      <!-- Layout tabs and status bar -->
      <footer class="statusbar">
        <nav class="layout-tabs">
          <button class="active">Model</button>
          <button>Layout1</button>
          <i class="slash"></i>
          <button>Layout2</button>
          <i class="slash"></i>
          <button aria-label="New layout"><svg width="16" height="16" viewBox="0 0 16 16"><path fill="#ddd" d="M7 0h3v16H7zM0 7h16v3H0z" /></svg></button>
          <i class="slash"></i>
        </nav>

        <div class="status-tools">
          <div class="group"><button class="model">MODEL</button></div>
          <div class="group">
            <button class="on" aria-label="Grid"><svg class="icon" viewBox="0 0 20 20"><path stroke="#fff" d="M5.500 0v19M10.500 0v19M15.500 0v19M0 4.500h20M0 9.500h20M0 14.500h20" /></svg></button>
            <button aria-label="Snap"><svg class="icon" viewBox="0 0 20 20"><path stroke="#d8d8d8" stroke-width="3" stroke-dasharray="3 3" d="M3 4h16M3 10h16M3 16h16" /></svg></button>
            <button class="drop" aria-label="Snap settings"><i class="caret large"></i></button>
          </div>
          <div class="group"><button aria-label="Dynamic Input"><svg class="icon" viewBox="0 0 20 20"><path stroke="#ddd" d="M0 4.500h9M4.500 0v9" /><path fill="#d8d8d8" d="M7 11h13v5H7z" /></svg></button></div>
          <div class="group joined">
            <button aria-label="Ortho"><svg class="icon" viewBox="0 0 20 20"><path fill="none" stroke="#ddd" d="M.5 0v19.500H20M1 13.500h5.500v6" /></svg></button>
            <button class="on" aria-label="Polar Tracking"><svg class="icon" viewBox="0 0 20 20"><path fill="none" stroke="#e8f2ff" stroke-width="1.500" d="M13.500 4.500a7.500 7.500 0 1 0 2.500 8M8 10l9-8M9 10.500h11" /></svg></button>
            <button class="drop" aria-label="Polar settings"><i class="caret large"></i></button>
            <button aria-label="Isometric Drafting"><svg class="icon" viewBox="0 0 20 20"><path stroke="#58b06a" stroke-width="1.500" d="M9.500 0v20" /><path stroke="#c0505a" stroke-width="1.500" d="M1 2l16 16" /><path fill="#3c4453" stroke="#ddd" d="M7.500 7.500h4v4h-4z" /></svg></button>
            <button class="drop" aria-label="Isometric settings"><i class="caret large"></i></button>
          </div>
          <div class="group joined">
            <button class="on" aria-label="Object Snap Tracking"><svg class="icon" viewBox="0 0 20 20"><path fill="none" stroke="#e8f2ff" stroke-width="1.500" d="M15 3L1 17h19" /><path fill="#fff" d="M6 9h4v4H6z" /></svg></button>
            <button class="on" aria-label="Object Snap"><svg class="icon" viewBox="0 0 20 20"><path fill="none" stroke="#fff" d="M6 2.500h13.500v17h-17V6M.5.500h5v5h-5z" /></svg></button>
            <button class="drop" aria-label="Object Snap settings"><i class="caret large"></i></button>
          </div>
          <div class="group">
            <button class="on" aria-label="Annotation Visibility"><svg class="icon" viewBox="0 0 20 20"><use href="#arrow-head" x="-1" y="0" width="19" height="20" fill="#fff" /><circle cx="16" cy="4.500" r="3.500" fill="none" stroke="#fff" /></svg></button>
            <button aria-label="AutoScale"><svg class="icon" viewBox="0 0 20 20"><use href="#arrow-head" x="-1" y="0" width="19" height="20" fill="#d8d8d8" /><path fill="#fff" stroke="#3c4453" stroke-width=".5" d="M17 0l-4 5h3l-1 4 5-5h-3z" /></svg></button>
            <button aria-label="Annotation Scale"><svg class="icon" viewBox="0 0 20 20"><use href="#arrow-head" x="0" y="0" width="19" height="20" fill="#d8d8d8" /></svg></button>
            <button class="scale">1:1</button>
            <button class="drop" aria-label="Scale list"><i class="caret large"></i></button>
          </div>
          <div class="group">
            <button aria-label="Workspace Switching"><svg class="icon" viewBox="0 0 20 20"><circle cx="10" cy="10" r="5.500" fill="none" stroke="#d8d8d8" stroke-width="5" /><circle cx="10" cy="10" r="8.500" fill="none" stroke="#d8d8d8" stroke-width="3" stroke-dasharray="3.300 3.380" /></svg></button>
            <button class="drop" aria-label="Workspaces"><i class="caret large"></i></button>
          </div>
          <div class="group joined"><button aria-label="Annotation Monitor"><svg class="icon" viewBox="0 0 20 20"><path fill="#ddd" d="M9 0h2v20H9zM0 9h20v2H0z" /></svg></button></div>
          <div class="group"><button aria-label="Isolate Objects"><svg class="icon" viewBox="0 0 20 20"><path fill="none" stroke="#ddd" stroke-width="1.200" d="M.5.500h7v7h-7zM8 12l4.500 7.500h-9z" /><circle cx="15.500" cy="9" r="4" fill="none" stroke="#ddd" stroke-width="1.200" /></svg></button></div>
          <div class="group"><button class="perf" aria-label="Graphics Performance"><svg width="26" height="26" viewBox="0 0 26 26"><path fill="#2a68b5" d="M0 1h15c5 1 6 6 6 9v6l-6 4H0z" /><path fill="#f8b81e" d="M0 14h7l3 7H0z" /><path stroke="#dbe8f7" d="M5.500 0v14M0 6.500h14" /><path fill="none" stroke="#4fae57" stroke-width="4" d="M11 17l5 6 9-9" /></svg></button></div>
          <div class="group">
            <button aria-label="Clean Screen"><svg class="icon" viewBox="0 0 20 20"><path fill="none" stroke="#ddd" d="M.5 3.500h19v13H.5z" /><path fill="#ddd" d="M13 5h5v5zM2 10l5 5H2z" /></svg></button>
            <button aria-label="Customization"><svg class="icon" viewBox="0 0 20 20"><path fill="#ddd" d="M0 1h20v2H0zM0 9h20v2H0zM0 17h20v2H0z" /></svg></button>
          </div>
        </div>
      </footer>
    </div>
  </body>
</html>
```

FILE: styles.css
```css
* {
  box-sizing: border-box;
}

body {
  margin: 0;
  height: 100vh;
  overflow: hidden;
  background-color: #e6edf2;
  color: #f0f0f0;
  font-family: "Open Sans", "Noto Sans", sans-serif;
  font-size: 14px;
  line-height: 20px;
}

button {
  display: flex;
  align-items: center;
  margin: 0;
  padding: 0;
  border: none;
  background: none;
  color: inherit;
  font: inherit;
  white-space: nowrap;
  cursor: pointer;
}

svg {
  display: block;
  flex: none;
}

.defs {
  position: absolute;
}

.icon {
  width: 20px;
  height: 20px;
}

.app {
  display: flex;
  flex-direction: column;
  height: 100%;
  margin-left: 2px;
  padding: 0 3px;
  border-left: 1px solid #0696d7;
  border-top: 1px solid #0696d7;
  background-color: #222933;
}

.caret {
  flex: none;
  width: 0;
  height: 0;
  border: 3px solid transparent;
  border-top: 4px solid #dcdcdc;
  border-bottom: none;
}

.caret.dim {
  border-top-color: #6f757e;
}

.caret.large,
.panel-title .caret {
  border-width: 5px 5px 0;
}

.caret.dark {
  border-top-color: #4b4b4d;
}

.caret.up {
  transform: rotate(180deg);
}

/* Title bar */
.titlebar {
  display: flex;
  align-items: center;
  height: 38px;
  padding-bottom: 4px;
}

.quick-access {
  display: flex;
  align-items: center;
  gap: 10px;
}

.logo {
  margin-right: 1px;
}

.logo-a {
  fill: #fff;
  font-size: 16px;
  font-weight: 700;
}

.logo-cad {
  fill: #fff;
  font-size: 9px;
  font-weight: 700;
}

.narrow {
  width: 6px;
  justify-content: center;
}

.share {
  gap: 5px;
  color: #82c6ff;
}

.window-title {
  flex: 1;
  display: flex;
  justify-content: center;
  gap: 17px;
  margin: 0;
  font-size: 14px;
  font-weight: 400;
}

.title-tools {
  display: flex;
  align-items: center;
}

.search {
  width: 223px;
  height: 26px;
  margin: 0 5px 0 6px;
  padding: 0 3px;
  border: none;
  background-color: #475062;
  color: #f0f0f0;
  font: italic 13px "Open Sans", sans-serif;
}

.search::placeholder {
  color: #b4bac4;
}

.user {
  gap: 6px;
  margin: 0 11px 0 10px;
}

.user .caret {
  margin-left: -3px;
}

.connect {
  gap: 8px;
  margin: 0 12px 0 10px;
}

.help {
  padding-left: 12px;
  border-left: 1px solid #4a5262;
}

.help-mark {
  fill: #333a45;
  font-size: 15px;
}

.notice {
  flex-direction: column;
  margin: 0 84px 6px 10px;
}

.notice .dot {
  width: 10px;
  height: 10px;
  border-radius: 50%;
  background-color: #ff8a50;
}

.window-buttons {
  display: flex;
  gap: 14px;
  margin: 0 6px 4px 0;
}

/* Ribbon tabs */
.ribbon-tabs {
  display: flex;
  gap: 1px;
  height: 25px;
  padding-left: 4px;
  color: #b4b8bd;
}

.ribbon-tabs button {
  padding: 0 12px;
}

.ribbon-tabs .active {
  background-color: #3c4453;
  color: #fff;
}

.ribbon-tabs .minimize {
  gap: 6px;
  margin-left: 11px;
}

/* Ribbon */
.ribbon {
  display: grid;
  grid-template-columns:
    minmax(0, 278fr) minmax(0, 316fr) minmax(0, 184fr) minmax(0, 341fr) minmax(0, 100fr)
    minmax(0, 277fr) minmax(0, 85fr) minmax(0, 121fr) minmax(0, 113fr) minmax(0, 92fr);
  height: 124px;
  margin: 0 1px;
  background-color: #3c4453;
}

.panel {
  display: flex;
  flex-direction: column;
  border-right: 1px solid #222933;
}

.panel:last-child {
  border-right: none;
}

.panel-body {
  flex: 1;
  display: flex;
  align-items: flex-start;
  padding: 5px 2px 0;
}

.panel-title {
  display: flex;
  height: 25px;
  padding-top: 2px;
}

.panel-title button:first-child {
  flex: 1;
  justify-content: center;
  gap: 7px;
}

.panel-title .launcher {
  width: 17px;
}

.big {
  flex-direction: column;
  width: 50px;
  padding-top: 3px;
  text-align: center;
}

.big.medium {
  width: 56px;
}

.big.wide {
  width: 66px;
}

.big.extra {
  width: 76px;
}

.big svg {
  width: 40px;
  height: 40px;
  margin-bottom: 5px;
}

.big .caret {
  margin-top: 4px;
}

.letter {
  height: 45px;
  color: #d8d8d8;
  font-size: 48px;
  font-weight: 600;
  line-height: 40px;
}

.tools {
  display: flex;
  flex-direction: column;
}

.tools button {
  gap: 7px;
  height: 31px;
}

.draw .tools {
  padding-left: 5px;
}

.draw .tools button,
.annotation .tools button,
.block .tools button,
.clipboard .tools button {
  gap: 10px;
}

.modify .panel-body {
  padding-left: 7px;
}

.modify .tools {
  width: 90px;
}

.modify .tools:nth-child(3) {
  width: 94px;
}

.modify .tools:last-child {
  width: auto;
}

.modify .tools .caret {
  margin-left: 7px;
}

.annotation .panel-body {
  padding-left: 5px;
}

.annotation .extra {
  margin: 0 5px 0 3px;
}

.layer-tools {
  flex: 1;
}

.combo {
  display: flex;
  align-items: center;
  flex: 1;
  gap: 4px;
  height: 28px;
  margin: 1px 0 2px;
  padding: 0 2px 0 4px;
  border: 1px solid #262c37;
  background-color: #4d586c;
}

.combo select {
  flex: 1;
  min-width: 0;
  padding: 0 0 0 2px;
  border: none;
  outline: none;
  appearance: none;
  background: none;
  color: inherit;
  font: inherit;
}

.yellow {
  fill: #ffd27a;
  stroke: #ffd27a;
  stroke-width: 0;
}

.cyan {
  fill: #5fd0d6;
}

.swatch {
  width: 20px;
  height: 20px;
  border: 1px solid #d0d0d0;
  background-color: #fff;
}

.line-sample {
  width: 80px;
  height: 1px;
  background-color: #fff;
}

.icon-row {
  display: flex;
  gap: 10px;
  height: 31px;
  padding-left: 4px;
}

.block .big {
  margin-right: 4px;
}

.prop-rows {
  flex: 1;
  padding-left: 2px;
}

.prop-row {
  display: flex;
  align-items: center;
  gap: 3px;
}

.properties .combo {
  padding-left: 8px;
}

.properties .line-sample {
  margin-right: -4px;
}

.groups .tools button {
  width: 30px;
  justify-content: center;
}

.groups .tools .selected {
  height: 28px;
  margin-top: 1px;
  border: 1px solid #6cbcfd;
  background-color: #41597a;
}

.utilities .panel-body {
  padding-left: 7px;
}

.utilities .tools {
  padding-left: 9px;
}

.clipboard .panel-body {
  padding-left: 9px;
}

.clipboard .tools {
  padding-left: 11px;
}

.view .panel-title {
  padding-right: 8px;
}

/* Drawing tabs */
.file-tabs,
.layout-tabs {
  display: flex;
  align-items: center;
}

.file-tabs {
  height: 33px;
  padding: 3px 0 0 12px;
  gap: 10px;
}

.file-tabs button,
.layout-tabs button {
  padding-top: 2px;
}

.slash {
  flex: none;
  width: 10px;
  height: 20px;
  background: linear-gradient(117deg, transparent 46%, #4a5262 46%, #4a5262 54%, transparent 54%);
}

.file-tabs .file {
  margin-right: 14px;
}

.file-tabs .active,
.layout-tabs .active {
  align-self: stretch;
  background-color: #3c4453;
  color: #fff;
  font-weight: 700;
  clip-path: polygon(11px 0, 100% 0, calc(100% - 11px) 100%, 0 100%);
}

.file-tabs .active {
  gap: 10px;
  padding: 0 15px 0 21px;
}

/* Drawing area */
.viewport {
  position: relative;
  flex: 1;
  min-height: 0;
  border-top: 5px solid #3c4453;
  border-bottom: 5px solid #3c4453;
  background-color: #212830;
}

.drawing {
  position: absolute;
  inset: 0;
}

.view-label {
  position: absolute;
  top: 6px;
  left: 4px;
  color: #dcdcdc;
}

.view-buttons {
  position: absolute;
  top: 11px;
  right: 11px;
  display: flex;
  gap: 11px;
}

.compass {
  position: absolute;
  top: 44px;
  right: 15px;
}

.cube-face,
.cube-side {
  font-family: "Liberation Sans", Arial, sans-serif;
  font-weight: 700;
  text-anchor: middle;
}

.cube-face {
  fill: #50555c;
  font-size: 12px;
}

.cube-side {
  fill: #b4b5b7;
  font-size: 22px;
}

.wcs {
  position: absolute;
  top: 208px;
  right: 59px;
  gap: 6px;
  height: 21px;
  padding: 0 4px;
  border: 1px solid #767a88;
  border-radius: 5px;
  background-color: #9b9dab;
  color: #61636c;
  font: 13px "Liberation Sans", Arial, sans-serif;
}

.navbar {
  position: absolute;
  top: 260px;
  right: 3px;
  border-radius: 3px;
  background-color: #5a5f66;
  box-shadow: 0 0 2px 1px #1a1f26;
}

.command {
  position: absolute;
  bottom: 0;
  left: 20%;
  right: 20%;
  margin: 0 8px 0 3px;
  font: 15px "DejaVu Sans Mono", monospace;
}

.history {
  display: flex;
  flex-direction: column;
  align-items: flex-start;
  gap: 6px;
  margin: 0 0 5px 79px;
}

.history p {
  margin: 0;
  padding: 0 2px;
  border-radius: 2px;
  background-color: #2a3038;
  color: #444a52;
  line-height: 19px;
  white-space: pre;
}

.command-line {
  display: flex;
}

.command-handle {
  display: flex;
  align-items: center;
  gap: 8px;
  width: 72px;
  padding-left: 5px;
  border-radius: 3px 0 0 3px;
  background-color: #282e3b;
}

.command-handle button:last-child {
  margin-left: 6px;
}

.command-box {
  flex: 1;
  display: flex;
  align-items: center;
  gap: 2px;
  height: 32px;
  margin: 1px 0;
  padding: 0 6px 0 5px;
  border-radius: 2px;
  background-color: #bcbdbf;
}

.command-box input {
  flex: 1;
  margin-left: 7px;
  padding: 0;
  border: none;
  outline: none;
  background: none;
  color: #333;
  font: inherit;
  font-style: italic;
}

.command-box input::placeholder {
  color: #5b5c5e;
}

/* Layout tabs and status bar */
.statusbar {
  display: flex;
  justify-content: space-between;
  height: 33px;
}

.layout-tabs {
  height: 30px;
  gap: 10px;
  padding-left: 10px;
}

.layout-tabs .active {
  padding-left: 21px;
  padding-right: 21px;
}

.status-tools {
  display: flex;
  gap: 3px;
  padding: 2px 3px 1px 0;
}

.group {
  display: flex;
  background-color: #3c4453;
}

.group.joined {
  margin-left: -2px;
}

.group button {
  width: 30px;
  justify-content: center;
}

.group .on {
  border: 1px solid #3c4453;
  background-color: #6590c0;
}

.group .drop {
  width: 20px;
}

.group .model {
  width: 59px;
}

.group .scale {
  width: 22px;
}

.group .perf {
  width: 34px;
}
```
